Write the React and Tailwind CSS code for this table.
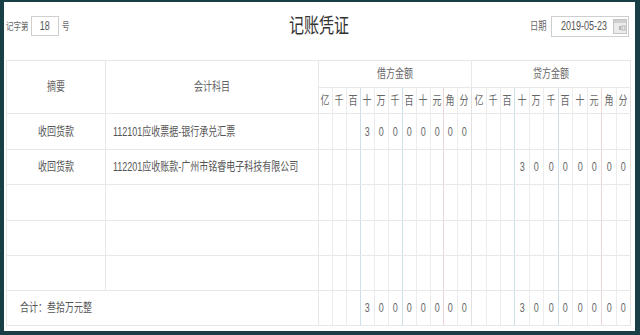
import React from 'react';

const LABELS = ['亿', '千', '百', '十', '万', '千', '百', '十', '元', '角', '分'];
const AMOUNT = ['', '', '', '3', '0', '0', '0', '0', '0', '0', '0'];
const EMPTY = ['', '', '', '', '', '', '', '', '', '', ''];

const DEBIT = [
  'w-[14px] border-r border-r-[#ececec]',
  'w-[14px] border-r border-r-[#ececec]',
  'w-[14px] border-r border-r-[#cddfe9]',
  'w-[14px] border-r border-r-[#ececec]',
  'w-[14px] border-r border-r-[#ececec]',
  'w-[14px] border-r border-r-[#cddfe9]',
  'w-[14px] border-r border-r-[#ececec]',
  'w-[14px] border-r border-r-[#ececec]',
  'w-[13px] border-r border-r-[#eed6d6]',
  'w-[14px] border-r border-r-[#ececec]',
  'w-[14px] border-r border-r-[#e2e2e2]',
];

const CREDIT = [
  'w-[15px] border-r border-r-[#ececec]',
  'w-[14px] border-r border-r-[#ececec]',
  'w-[14px] border-r border-r-[#cddfe9]',
  'w-[15px] border-r border-r-[#ececec]',
  'w-[14px] border-r border-r-[#ececec]',
  'w-[15px] border-r border-r-[#cddfe9]',
  'w-[14px] border-r border-r-[#ececec]',
  'w-[15px] border-r border-r-[#ececec]',
  'w-[14px] border-r border-r-[#eed6d6]',
  'w-[15px] border-r border-r-[#ececec]',
  'w-[14px] border-r border-r-[#e2e2e2]',
];

const ROWS = [
  { h: 'h-[36px]', summary: '收回货款', account: '112101应收票据-银行承兑汇票', debit: AMOUNT, credit: EMPTY },
  { h: 'h-[35px]', summary: '收回货款', account: '112201应收账款-广州市铭睿电子科技有限公司', debit: EMPTY, credit: AMOUNT },
  { h: 'h-[36px]', summary: '', account: '', debit: EMPTY, credit: EMPTY },
  { h: 'h-[35px]', summary: '', account: '', debit: EMPTY, credit: EMPTY },
  { h: 'h-[35px]', summary: '', account: '', debit: EMPTY, credit: EMPTY },
];

function T({ children, className = '' }) {
  return <span className={`inline-block scale-x-75 whitespace-nowrap ${className}`}>{children}</span>;
}

function Digits({ widths, values, className = '' }) {
  return (
    <div className="flex h-full">
      {values.map((v, i) => (
        <div key={i} className={`${widths[i]} h-full flex items-center justify-center ${className}`}>
          <T>{v}</T>
        </div>
      ))}
    </div>
  );
}

function CalendarIcon() {
  return (
    <svg width="14" height="15" viewBox="0 0 14 15">
      <rect x="0.5" y="0.5" width="13" height="14" fill="#ececec" stroke="#c4c4c4" />
      <rect x="1" y="1" width="12" height="3" fill="#cfcfcf" />
      <rect x="6" y="7" width="2" height="4" fill="#b5b5b5" />
      <rect x="9" y="7" width="3" height="4" fill="none" stroke="#b5b5b5" strokeWidth="1" />
    </svg>
  );
}

export default function App() {
  return (
    <div className="w-[640px] h-[335px] bg-white border-solid border-[#173f45] border-t-2 border-l-4 border-r-[5px] border-b-4 pl-[2px] pr-[4px] flex flex-col font-['Liberation_Sans','Noto_Sans_CJK_SC',sans-serif]">
      {/* header */}
      <div className="h-[58px] grid grid-cols-[1fr_auto_1fr] pt-[14px]">
        <div className="flex items-center h-[20px] text-[#666]">
          <div className="w-[25px] text-[10px]">
            <T className="origin-left">记字第</T>
          </div>
          <div className="w-[28px] h-[20px] border border-[#cfcfcf] flex items-center justify-center text-[12px] text-[#555]">
            <T>18</T>
          </div>
          <div className="ml-[3px] text-[10px]">
            <T className="origin-left">号</T>
          </div>
        </div>
        <div className="h-[20px] flex items-center justify-center text-[20px] leading-[20px] text-[#333]">
          <T>记账凭证</T>
        </div>
        <div className="flex items-center justify-end h-[20px]">
          <div className="w-[21px] text-[11px] text-[#666]">
            <T className="origin-left">日期</T>
          </div>
          <div className="w-[78px] h-[21px] mr-[2px] border border-[#cfcfcf] flex items-center overflow-hidden">
            <div className="flex-1 min-w-0 pl-[9px] text-[12px] text-[#555]">
              <T className="origin-left">2019-05-23</T>
            </div>
            <div className="w-[14px] shrink-0 mr-[1px] flex items-center">
              <CalendarIcon />
            </div>
          </div>
        </div>
      </div>

      {/* table */}
      <div className="border-l border-t border-[#e6e6e6] text-[12px] text-[#666]">
        <div className="flex h-[53px] border-b border-[#e8e8e8]">
          <div className="w-[99px] border-r border-[#e8e8e8] flex items-center justify-center">
            <T>摘要</T>
          </div>
          <div className="w-[213px] border-r border-[#e8e8e8] flex items-center justify-center">
            <T>会计科目</T>
          </div>
          <div className="w-[153px] flex flex-col">
            <div className="h-[27px] border-b border-r border-[#e8e8e8] flex items-center justify-center">
              <T>借方金额</T>
            </div>
            <div className="flex-1">
              <Digits widths={DEBIT} values={LABELS} />
            </div>
          </div>
          <div className="w-[159px] flex flex-col">
            <div className="h-[27px] border-b border-r border-[#e8e8e8] flex items-center justify-center">
              <T>贷方金额</T>
            </div>
            <div className="flex-1">
              <Digits widths={CREDIT} values={LABELS} />
            </div>
          </div>
        </div>

        {ROWS.map((r, idx) => (
          <div key={idx} className={`flex ${r.h} border-b border-[#e8e8e8] text-[#555]`}>
            <div className="w-[99px] border-r border-[#e8e8e8] flex items-center justify-center">
              <T>{r.summary}</T>
            </div>
            <div className="w-[213px] border-r border-[#e8e8e8] flex items-center pl-[7px]">
              <T className="origin-left">{r.account}</T>
            </div>
            <div className="w-[153px]">
              <Digits widths={DEBIT} values={r.debit} className="text-[#666]" />
            </div>
            <div className="w-[159px]">
              <Digits widths={CREDIT} values={r.credit} className="text-[#666]" />
            </div>
          </div>
        ))}

        <div className="flex h-[35px] border-b border-[#e8e8e8] text-[#555]">
          <div className="w-[312px] border-r border-[#e8e8e8] flex items-center pl-[13px]">
            <T className="origin-left">合计：叁拾万元整</T>
          </div>
          <div className="w-[153px]">
            <Digits widths={DEBIT} values={AMOUNT} className="text-[#666]" />
          </div>
          <div className="w-[159px]">
            <Digits widths={CREDIT} values={AMOUNT} className="text-[#666]" />
          </div>
        </div>
      </div>
    </div>
  );
}
